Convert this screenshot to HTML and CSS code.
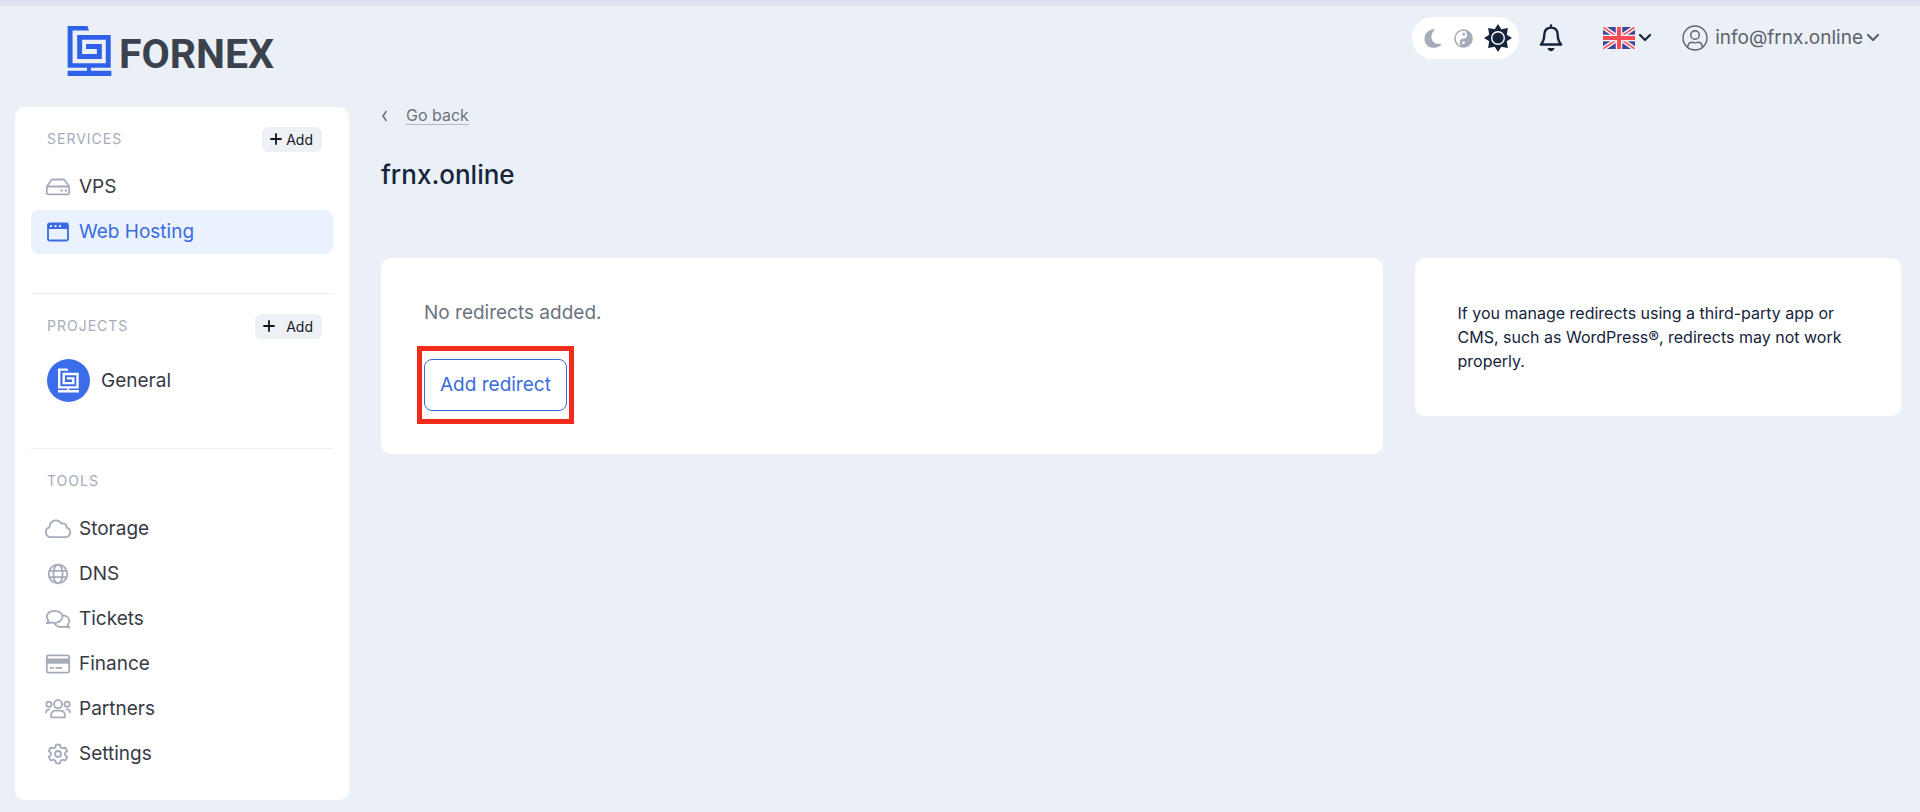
FILE: index.html
```html
<!DOCTYPE html>
<html lang="en">
<head>
<meta charset="utf-8">
<meta name="viewport" content="width=device-width, initial-scale=1">
<title>frnx.online – Fornex</title>
<link rel="stylesheet" href="styles.css">
</head>
<body>
<svg class="sprite" aria-hidden="true">
  <symbol id="logo-mark" viewBox="0 0 133 152">
    <path fill="currentColor" d="M0 0H60L65 14H15V113H116V42H44V85H89V70H56V55H104V100H29V27H131V127H71V136H133V152H0V136H59V127H0Z"/>
  </symbol>
  <symbol id="chevron" viewBox="0 0 14 10">
    <path d="M2 2l5 5 5-5" fill="none" stroke="currentColor" stroke-width="2.2" stroke-linecap="round" stroke-linejoin="round"/>
  </symbol>
  <symbol id="plus" viewBox="0 0 12 12">
    <path d="M6 1v10M1 6h10" fill="none" stroke="currentColor" stroke-width="1.8" stroke-linecap="round"/>
  </symbol>
</svg>

<header class="topbar">
  <a class="brand" href="#" aria-label="Fornex">
    <svg class="brand-mark"><use href="#logo-mark"/></svg>
    <span class="brand-name">FORNEX</span>
  </a>
  <div class="topbar-actions">
    <div class="theme-switch">
      <button class="icon-button" type="button" aria-label="Dark theme">
        <svg class="icon-small" viewBox="0 0 20 20"><path fill="currentColor" d="M12 0.300C4.500 0 0.500 5 0.500 10.200 0.500 16 5 19.800 10.200 19.800c4 0 7-1.800 8.600-4.400C12 17 7.800 13 7.800 8.400 7.800 5 9.500 2 12 .3z"/></svg>
      </button>
      <button class="icon-button" type="button" aria-label="Auto theme">
        <svg class="icon-small" viewBox="0 0 20 20"><circle cx="10" cy="10" r="9" fill="none" stroke="currentColor" stroke-width="1.600"/><path fill="currentColor" d="M10 1a9 9 0 0 1 0 18c-5 0-5.500-9 0-9s4.500-7.500 0-9z"/><circle cx="10.200" cy="5.500" r="1.500" fill="currentColor"/><circle cx="10" cy="14.500" r="1.500" fill="#fff"/></svg>
      </button>
      <button class="icon-button is-active" type="button" aria-label="Light theme">
        <svg class="icon-sun" viewBox="0 0 28 28"><path fill="currentColor" d="M14 0l3.300 5.200 6.600-1.100-1.100 6.600L28 14l-5.200 3.300 1.100 6.600-6.600-1.100L14 28l-3.300-5.200-6.600 1.100 1.100-6.600L0 14l5.200-3.300-1.100-6.600 6.600 1.100z"/><circle cx="14" cy="14" r="6.300" fill="none" stroke="#fff" stroke-width="1.400"/></svg>
      </button>
    </div>
    <button class="icon-button bell" type="button" aria-label="Notifications">
      <svg class="icon-bell" viewBox="0 0 24 28"><path d="M12 3.500c-4.500 0-6.700 3.200-6.700 7.200 0 5-1.300 7.300-3.400 9.800h20.200c-2.100-2.500-3.400-4.800-3.400-9.800 0-4-2.200-7.200-6.700-7.200zM12 3.500V1.500" fill="none" stroke="currentColor" stroke-width="2.400" stroke-linecap="round" stroke-linejoin="round"/><path d="M8.500 24h7c-.4 2-1.700 3.200-3.500 3.200S8.900 26 8.500 24z" fill="currentColor"/></svg>
    </button>
    <button class="menu-button language" type="button" aria-label="Language: English">
      <svg class="icon-flag" viewBox="0 0 32 22">
        <defs><clipPath id="flag-clip"><rect width="32" height="22" rx="1.500"/></clipPath></defs>
        <g clip-path="url(#flag-clip)">
          <path fill="#41479b" d="M0 0h32v22H0z"/>
          <path d="M0 0l32 22M32 0L0 22" stroke="#f5f5fa" stroke-width="4.400"/>
          <path d="M0 0l32 22M32 0L0 22" stroke="#ff4b55" stroke-width="1.500"/>
          <path d="M16 0v22M0 11h32" stroke="#f5f5fa" stroke-width="6.500"/>
          <path d="M16 0v22M0 11h32" stroke="#ff4b55" stroke-width="4"/>
        </g>
      </svg>
      <svg class="icon-chevron"><use href="#chevron"/></svg>
    </button>
    <button class="menu-button account" type="button">
      <svg class="icon-user" viewBox="0 0 26 26" fill="none" stroke="currentColor" stroke-width="1.400"><circle cx="13" cy="13" r="12"/><circle cx="13" cy="10" r="4.300"/><path d="M5.800 22.300c0-3 1.700-5 4.400-5 1.100 0 1.500.6 2.800.6s1.700-.6 2.800-.6c2.700 0 4.400 2 4.400 5"/></svg>
      <span class="account-name">info@frnx.online</span>
      <svg class="icon-chevron"><use href="#chevron"/></svg>
    </button>
  </div>
</header>

<div class="layout">
  <nav class="sidebar" aria-label="Main">
    <section class="group">
      <div class="group-head">
        <h2 class="group-title">SERVICES</h2>
        <button class="add-button" type="button"><svg class="icon-plus"><use href="#plus"/></svg>Add</button>
      </div>
      <ul class="menu">
        <li><a class="menu-item" href="#">
          <svg class="menu-icon" viewBox="0 0 26 22" fill="none" stroke="currentColor" stroke-width="1.800" stroke-linejoin="round"><path d="M1.800 10.500L6.300 4.200q.5-.7 1.300-.7h10.800q.8 0 1.300.7l4.500 6.300"/><rect x="1.800" y="10.500" width="22.400" height="7.800" rx="1.500"/><path d="M15.400 14.500h2.400M19.700 14.500h2.400" stroke-width="2.200"/></svg>
          VPS</a></li>
        <li><a class="menu-item is-current" href="#" aria-current="page">
          <svg class="menu-icon" viewBox="0 0 26 22" fill="none" stroke="currentColor" stroke-width="1.800"><rect x="3" y="2.500" width="20" height="17" rx="1.500"/><path fill="currentColor" stroke="none" d="M3 3h20v5H3z"/><path d="M5 5.200h2M9.500 5.200h2M14 5.200h2" stroke="#fff"/></svg>
          Web Hosting</a></li>
      </ul>
    </section>

    <section class="group">
      <div class="group-head">
        <h2 class="group-title">PROJECTS</h2>
        <button class="add-button is-wide" type="button"><svg class="icon-plus"><use href="#plus"/></svg>Add</button>
      </div>
      <a class="project" href="#">
        <span class="project-avatar"><svg class="project-mark"><use href="#logo-mark"/></svg></span>
        General</a>
    </section>

    <section class="group">
      <div class="group-head">
        <h2 class="group-title">TOOLS</h2>
      </div>
      <ul class="menu">
        <li><a class="menu-item" href="#">
          <svg class="menu-icon" viewBox="0 0 26 22" fill="none" stroke="currentColor" stroke-width="1.800" stroke-linejoin="round"><path d="M6 19.200c-3 0-5.100-2.200-5.100-5 0-2.500 1.600-4.300 3.600-4.900C4.300 5.400 7.200 2.300 10.700 2.300c2.500 0 4.600 1.300 5.800 3.400 2.700-1 5.400.7 5.100 3.900 2.200.5 3.500 2.500 3.500 4.700 0 2.800-2.100 4.900-4.900 4.900z"/></svg>
          Storage</a></li>
        <li><a class="menu-item" href="#">
          <svg class="menu-icon" viewBox="0 0 26 22" fill="none" stroke="currentColor" stroke-width="1.800"><circle cx="13" cy="11" r="9.300"/><ellipse cx="13" cy="11" rx="4.600" ry="9.300"/><path d="M4.500 7.800h17M4.500 14.200h17"/></svg>
          DNS</a></li>
        <li><a class="menu-item" href="#">
          <svg class="menu-icon" viewBox="0 0 26 22" fill="none" stroke="currentColor" stroke-width="1.800" stroke-linejoin="round"><path d="M1.800 15.200c1-.9 1.500-1.700 1.700-2.700C2.300 11.500 1.700 10.200 1.700 8.800c0-3.500 3.500-6 7.900-6s7.900 2.600 7.900 6-3.500 6-7.900 6c-1.100 0-2.200-.2-3.200-.5-1.300.7-2.900 1-4.600.9z"/><path d="M17.500 7.300c3.900.2 6.800 2.500 6.800 5.700 0 1.400-.6 2.700-1.700 3.700.2 1 .7 1.800 1.700 2.700-1.700.1-3.300-.2-4.600-.9-1 .3-2 .5-3.200.5-3 0-5.500-1.300-6.900-3.300"/></svg>
          Tickets</a></li>
        <li><a class="menu-item" href="#">
          <svg class="menu-icon" viewBox="0 0 26 22" fill="none" stroke="currentColor" stroke-width="1.800"><rect x="1.800" y="2.300" width="22.400" height="17.400" rx="1.500"/><path fill="currentColor" stroke="none" d="M1.800 5.500h22.400v5.200H1.800z"/><path d="M5 14.900h3.800M10.500 14.900h6.500" stroke-width="1.900"/></svg>
          Finance</a></li>
        <li><a class="menu-item" href="#">
          <svg class="menu-icon" viewBox="0 0 26 22" fill="none" stroke="currentColor" stroke-width="1.800" stroke-linecap="round" stroke-linejoin="round"><circle cx="13" cy="6.200" r="4"/><circle cx="3.900" cy="6.200" r="2.600"/><circle cx="22.100" cy="6.200" r="2.600"/><path d="M6 19.300c-.3-3.800 1-6.700 4.400-6.700h5.200c3.400 0 4.700 2.900 4.400 6.700zM1 14.300c.2-2 1.200-3 3.300-3M25 14.300c-.2-2-1.200-3-3.300-3"/></svg>
          Partners</a></li>
        <li><a class="menu-item" href="#">
          <svg class="menu-icon" viewBox="0 0 26 22" fill="none" stroke="currentColor" stroke-width="1.800" stroke-linejoin="round"><circle cx="13" cy="11" r="3"/><path d="M11 1.600h4l.6 2.700 1.900 1.100 2.700-.9 2 3.500-2.100 1.900v2.200l2.100 1.900-2 3.500-2.700-.9-1.900 1.100-.6 2.700h-4l-.6-2.700-1.900-1.100-2.700.9-2-3.500 2.100-1.900V9.900L3.800 8l2-3.500 2.700.9 1.900-1.100z"/></svg>
          Settings</a></li>
      </ul>
    </section>
  </nav>

  <main class="content">
    <a class="back" href="#">
      <svg class="back-icon" viewBox="0 0 7 12"><path d="M5.500 1L2 6l3.500 5" fill="none" stroke="currentColor" stroke-width="1.600"/></svg>
      <span class="back-label">Go back</span>
    </a>
    <h1 class="page-title">frnx.online</h1>
    <div class="cards">
      <section class="card">
        <p class="empty-text">No redirects added.</p>
        <button class="primary-outline highlighted" type="button">Add redirect</button>
      </section>
      <aside class="card note">
        <p class="note-text">If you manage redirects using a third-party app or CMS, such as WordPress®, redirects may not work properly.</p>
      </aside>
    </div>
  </main>
</div>
</body>
</html>
```
FILE: styles.css
```css
* {
  box-sizing: border-box;
}

body {
  margin: 0;
  border-top: 6px solid #dde2ec;
  background: #ebf0f6;
  color: #363a45;
  font-family: Inter, "Liberation Sans", sans-serif;
  font-size: 19px;
  line-height: 24px;
}

h1, h2, p, ul {
  margin: 0;
  padding: 0;
}

ul {
  list-style: none;
}

a {
  color: inherit;
  text-decoration: none;
}

button {
  padding: 0;
  border: 0;
  background: none;
  color: inherit;
  font: inherit;
  cursor: pointer;
}

svg {
  display: block;
  flex: none;
}

.sprite {
  position: absolute;
  width: 0;
  height: 0;
}

/* Top bar */

.topbar {
  display: flex;
  justify-content: space-between;
  align-items: flex-start;
  padding: 11px 40px 31px 67px;
}

.brand {
  display: flex;
  align-items: flex-end;
  gap: 7px;
  padding-top: 9px;
  color: #2f62e9;
}

.brand-mark {
  width: 45px;
  height: 50px;
}

.brand-name {
  color: #3a424d;
  font-family: Roboto, "Liberation Sans", sans-serif;
  font-size: 41px;
  font-weight: 700;
  line-height: 44px;
}

.topbar-actions {
  display: flex;
  align-items: center;
  color: #14253c;
}

.theme-switch {
  display: flex;
  align-items: center;
  gap: 11px;
  height: 42px;
  padding: 0 7px 0 12px;
  border-radius: 21px;
  background: #fff;
}

.icon-button {
  display: flex;
  color: #a5abba;
}

.icon-button.is-active,
.icon-button.bell {
  color: #14253c;
}

.icon-small {
  width: 19px;
  height: 19px;
}

.icon-sun {
  width: 28px;
  height: 28px;
}

.bell {
  margin-left: 20px;
}

.icon-bell {
  width: 24px;
  height: 28px;
}

.menu-button {
  display: flex;
  align-items: center;
  gap: 3px;
}

.language {
  margin-left: 40px;
}

.icon-flag {
  width: 32px;
  height: 22px;
}

.icon-chevron {
  width: 14px;
  height: 10px;
}

.account {
  margin-left: 30px;
  color: #5b626d;
}

.icon-user {
  width: 26px;
  height: 26px;
}

.account-name {
  margin-left: 4px;
}

/* Page layout */

.layout {
  display: grid;
  grid-template-columns: 334px minmax(0, 1fr);
  gap: 32px;
  align-items: start;
  padding: 0 19px 12px 15px;
}

/* Sidebar */

.sidebar {
  padding: 19px 16px 24px;
  border-radius: 10px;
  background: #fff;
}

.group + .group {
  margin-top: 39px;
  padding-top: 19px;
  border-top: 1px solid #eceff3;
}

.group-head {
  display: flex;
  justify-content: space-between;
  align-items: center;
  min-height: 26px;
  padding: 0 11px 0 16px;
}

.group-title {
  color: #a5abba;
  font-size: 14px;
  font-weight: 400;
  letter-spacing: 1px;
}

.add-button {
  display: flex;
  align-items: center;
  gap: 4px;
  padding: 0 9px 0 8px;
  border-radius: 6px;
  background: #edf0f4;
  color: #14171c;
  font-size: 14px;
  line-height: 25px;
}

.add-button.is-wide {
  gap: 11px;
}

.icon-plus {
  width: 12px;
  height: 12px;
}

.menu {
  display: grid;
  gap: 1px;
  margin-top: 13px;
}

.menu-item {
  display: flex;
  align-items: center;
  gap: 8px;
  padding: 10px 14px;
  border-radius: 8px;
}

.menu-item.is-current {
  background: #ebf2ff;
  color: #3a6be0;
}

.menu-icon {
  width: 26px;
  height: 22px;
  color: #a5abba;
}

.is-current .menu-icon {
  color: inherit;
}

.project {
  display: flex;
  align-items: center;
  gap: 11px;
  margin-top: 20px;
  padding: 0 16px 7px;
}

.project-avatar {
  display: grid;
  place-items: center;
  width: 43px;
  height: 43px;
  border-radius: 50%;
  background: #3b6dea;
  color: #fff;
}

.project-mark {
  width: 21px;
  height: 25px;
}

/* Content */

.back {
  display: flex;
  align-items: center;
  gap: 18px;
  width: fit-content;
  height: 17px;
  color: #6c7380;
  font-size: 16px;
}

.back-icon {
  width: 7px;
  height: 12px;
}

.back-label {
  border-bottom: 1px solid #b4bac5;
  line-height: 18px;
}

.page-title {
  margin-top: 33px;
  color: #14253c;
  font-size: 26px;
  font-weight: 500;
  line-height: 36px;
}

.cards {
  display: grid;
  grid-template-columns: 35fr 17fr;
  gap: 32px;
  align-items: start;
  margin-top: 65px;
}

.card {
  padding: 43px;
  border-radius: 10px;
  background: #fff;
}

.empty-text {
  color: #6c7380;
}

.primary-outline {
  position: relative;
  margin-top: 34px;
  padding: 13px 15px;
  border: 1px solid #3a6be0;
  border-radius: 8px;
  color: #3a6be0;
}

/* Marker frame drawn over the button */
.highlighted::after {
  content: "";
  position: absolute;
  inset: -14px -8px;
  border: 5px solid #f42c1d;
}

.note-text {
  color: #14253c;
  font-size: 16px;
}
```
